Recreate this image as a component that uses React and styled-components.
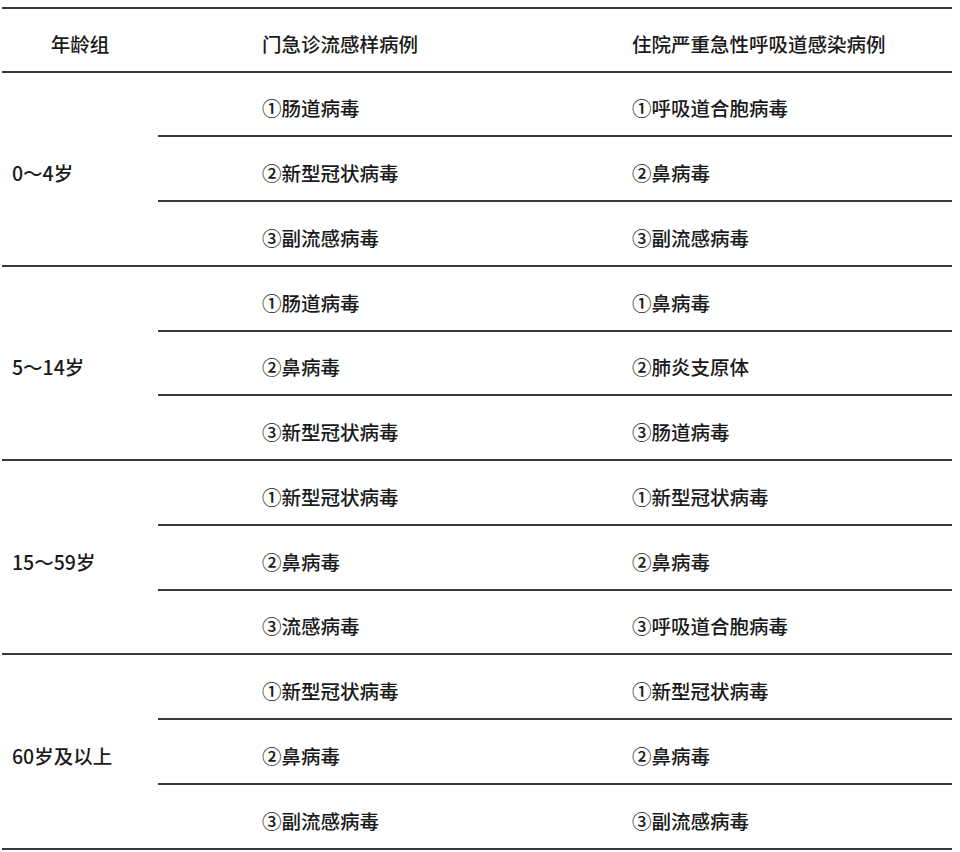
import React from "react";
import styled, { createGlobalStyle } from "styled-components";

const Global = createGlobalStyle`
  html, body { margin: 0; padding: 0; background: #fff; }
  body { font-family: "Noto Sans CJK SC", "Noto Sans", sans-serif; color: #1a1a1a; }
`;

const Wrap = styled.div`
  padding: 7px 8px 0 2px;
`;

const Table = styled.div`
  width: 950px;
  border-top: 2px solid #3a3a3a;
  font-size: 19.5px;
  font-weight: 500;
`;

const HeaderRow = styled.div`
  display: grid;
  grid-template-columns: 156px 104px 370px 1fr;
  align-items: center;
  height: 63.5px;
  padding-top: 8px;
  border-bottom: 2px solid #3a3a3a;
  box-sizing: border-box;
`;

const HeadCell = styled.div`
  text-align: ${(p) => (p.$center ? "center" : "left")};
  grid-column: ${(p) => p.$col};
  white-space: nowrap;
`;

const Group = styled.div`
  display: grid;
  grid-template-columns: 156px 1fr;
  border-bottom: 2px solid #3a3a3a;
`;

const AgeCell = styled.div`
  display: flex;
  align-items: center;
  padding: 8px 0 0 10px;
`;

const SubRow = styled.div`
  display: grid;
  grid-template-columns: 370px 1fr;
  align-items: center;
  padding: 8px 0 0 104px;
  height: ${(p) => (p.$last ? "62.75px" : "64.75px")};
  box-sizing: border-box;
  border-bottom: ${(p) => (p.$last ? "none" : "2px solid #3a3a3a")};
`;

const Cell = styled.div`
  white-space: nowrap;
`;

const data = [
  {
    age: "0～4岁",
    rows: [
      ["①肠道病毒", "①呼吸道合胞病毒"],
      ["②新型冠状病毒", "②鼻病毒"],
      ["③副流感病毒", "③副流感病毒"],
    ],
  },
  {
    age: "5～14岁",
    rows: [
      ["①肠道病毒", "①鼻病毒"],
      ["②鼻病毒", "②肺炎支原体"],
      ["③新型冠状病毒", "③肠道病毒"],
    ],
  },
  {
    age: "15～59岁",
    rows: [
      ["①新型冠状病毒", "①新型冠状病毒"],
      ["②鼻病毒", "②鼻病毒"],
      ["③流感病毒", "③呼吸道合胞病毒"],
    ],
  },
  {
    age: "60岁及以上",
    rows: [
      ["①新型冠状病毒", "①新型冠状病毒"],
      ["②鼻病毒", "②鼻病毒"],
      ["③副流感病毒", "③副流感病毒"],
    ],
  },
];

export default function App() {
  return (
    <Wrap>
      <Global />
      <Table>
        <HeaderRow>
          <HeadCell $center $col="1">年龄组</HeadCell>
          <HeadCell $col="3">门急诊流感样病例</HeadCell>
          <HeadCell $col="4">住院严重急性呼吸道感染病例</HeadCell>
        </HeaderRow>
        {data.map((g) => (
          <Group key={g.age}>
            <AgeCell>{g.age}</AgeCell>
            <div>
              {g.rows.map((r, i) => (
                <SubRow key={i} $last={i === g.rows.length - 1}>
                  <Cell>{r[0]}</Cell>
                  <Cell>{r[1]}</Cell>
                </SubRow>
              ))}
            </div>
          </Group>
        ))}
      </Table>
    </Wrap>
  );
}
